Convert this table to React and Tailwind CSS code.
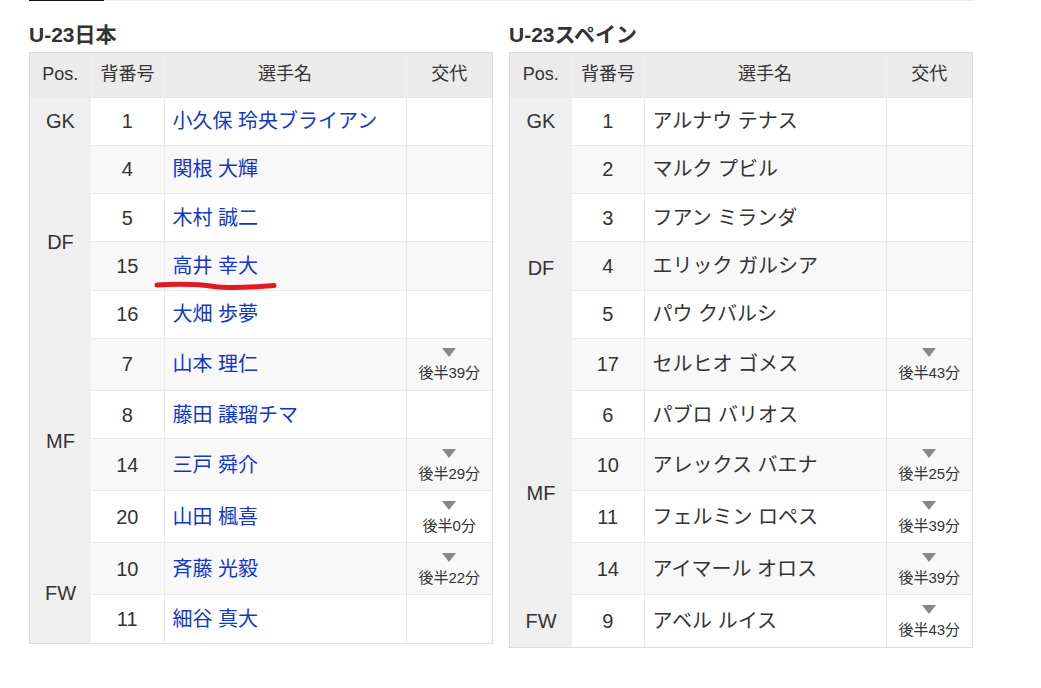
import React from "react";

// Starting lineups with substitution times
const japan = {
    title: "U-23日本",
    link: true,
    groups: [
        { pos: "GK", players: [{ no: 1, name: "小久保 玲央ブライアン" }] },
        {
            pos: "DF",
            players: [
                { no: 4, name: "関根 大輝" },
                { no: 5, name: "木村 誠二" },
                { no: 15, name: "高井 幸大", mark: true },
                { no: 16, name: "大畑 歩夢" },
            ],
        },
        {
            pos: "MF",
            players: [
                { no: 7, name: "山本 理仁", sub: "後半39分" },
                { no: 8, name: "藤田 譲瑠チマ" },
                { no: 14, name: "三戸 舜介", sub: "後半29分" },
                { no: 20, name: "山田 楓喜", sub: "後半0分" },
            ],
        },
        {
            pos: "FW",
            players: [
                { no: 10, name: "斉藤 光毅", sub: "後半22分" },
                { no: 11, name: "細谷 真大" },
            ],
        },
    ],
};

const spain = {
    title: "U-23スペイン",
    link: false,
    groups: [
        { pos: "GK", players: [{ no: 1, name: "アルナウ テナス" }] },
        {
            pos: "DF",
            players: [
                { no: 2, name: "マルク プビル" },
                { no: 3, name: "フアン ミランダ" },
                { no: 4, name: "エリック ガルシア" },
                { no: 5, name: "パウ クバルシ" },
                { no: 17, name: "セルヒオ ゴメス", sub: "後半43分" },
            ],
        },
        {
            pos: "MF",
            players: [
                { no: 6, name: "パブロ バリオス" },
                { no: 10, name: "アレックス バエナ", sub: "後半25分" },
                { no: 11, name: "フェルミン ロペス", sub: "後半39分" },
                { no: 14, name: "アイマール オロス", sub: "後半39分" },
            ],
        },
        { pos: "FW", players: [{ no: 9, name: "アベル ルイス", sub: "後半43分" }] },
    ],
};

const SubOut = ({ time }) => (
    <div className="flex flex-col items-center">
        <div className="mt-[2px] mb-[7px] w-0 h-0 border-l-[7px] border-r-[7px] border-t-[9px] border-l-transparent border-r-transparent border-t-[#888888]"></div>
        <div className="text-[15px] leading-[18px] text-[#333]">{time}</div>
    </div>
);

const Underline = () => (
    <svg
        className="absolute left-[-11px] top-[39px] pointer-events-none"
        width="124"
        height="12"
        viewBox="0 0 124 12"
    >
        <path
            d="M3 4 C 22 3, 44 3, 60 5.5 C 74 7.5, 96 6.5, 120 4.5"
            fill="none"
            stroke="#e01a22"
            strokeWidth="5"
            strokeLinecap="round"
        />
    </svg>
);

const LineupTable = ({ team, widths }) => {
    const rows = [];
    let idx = 0;
    const total = team.groups.reduce((n, g) => n + g.players.length, 0);
    team.groups.forEach((g) => {
        g.players.forEach((p, pi) => {
            const striped = idx % 2 === 1;
            const last = idx === total - 1;
            const bb = last ? "border-b-0" : "border-b";
            rows.push(
                <tr
                    key={`${g.pos}-${p.no}`}
                    className={`${p.sub ? "h-[52px]" : "h-[48.3px]"} ${striped ? "bg-[#f8f8f8]" : "bg-white"}`}
                >
                    {pi === 0 && (
                        <td
                            rowSpan={g.players.length}
                            className="bg-[#efefef] text-center align-middle border-b-0"
                        >
                            {g.pos}
                        </td>
                    )}
                    <td className={`text-center border-r border-[#eaeaea] ${bb}`}>{p.no}</td>
                    <td className={`relative pl-[8px] border-r border-[#eaeaea] ${bb}`}>
                        <span className={team.link ? "text-[#1237c4]" : "text-[#333]"}>{p.name}</span>
                        {p.mark && <Underline />}
                    </td>
                    <td className={`text-center p-0 border-[#eaeaea] ${bb}`}>
                        {p.sub && <SubOut time={p.sub} />}
                    </td>
                </tr>
            );
            idx++;
        });
    });

    return (
        <div className="w-[464px]">
            <h2 className="pt-[20px] pb-[3px] text-[21px] leading-[28px] font-bold text-[#333]">
                {team.title}
            </h2>
            <div className="border border-[#dcdcdc]">
                <table className="w-full border-collapse table-fixed text-[20px] text-[#333]">
                    <colgroup>
                        {widths.map((w, i) => (
                            <col key={i} style={{ width: w }} />
                        ))}
                    </colgroup>
                    <thead>
                        <tr className="h-[44px] bg-[#ebebeb] text-[18px]">
                            <th className="font-normal border-r border-b border-[#f3f3f3] border-b-[#e6e6e6]">Pos.</th>
                            <th className="font-normal border-r border-b border-[#f3f3f3] border-b-[#e6e6e6]">背番号</th>
                            <th className="font-normal border-r border-b border-[#f3f3f3] border-b-[#e6e6e6]">選手名</th>
                            <th className="font-normal border-b border-[#e6e6e6]">交代</th>
                        </tr>
                    </thead>
                    <tbody>{rows}</tbody>
                </table>
            </div>
        </div>
    );
};

const App = () => {
    return (
        <div className="min-h-screen bg-white font-['Liberation_Sans','Noto_Sans_CJK_JP',sans-serif] text-[#333]">
            <div className="flex ml-[29px] w-[945px]">
                <div className="w-[75px] h-px bg-[#111]"></div>
                <div className="flex-1 h-px bg-[#ececec]"></div>
            </div>
            <div className="flex gap-4 pl-[29px]">
                <LineupTable team={japan} widths={[61, 73, 242, 86]} />
                <LineupTable team={spain} widths={[62, 72, 242, 86]} />
            </div>
        </div>
    );
};

export default App;
